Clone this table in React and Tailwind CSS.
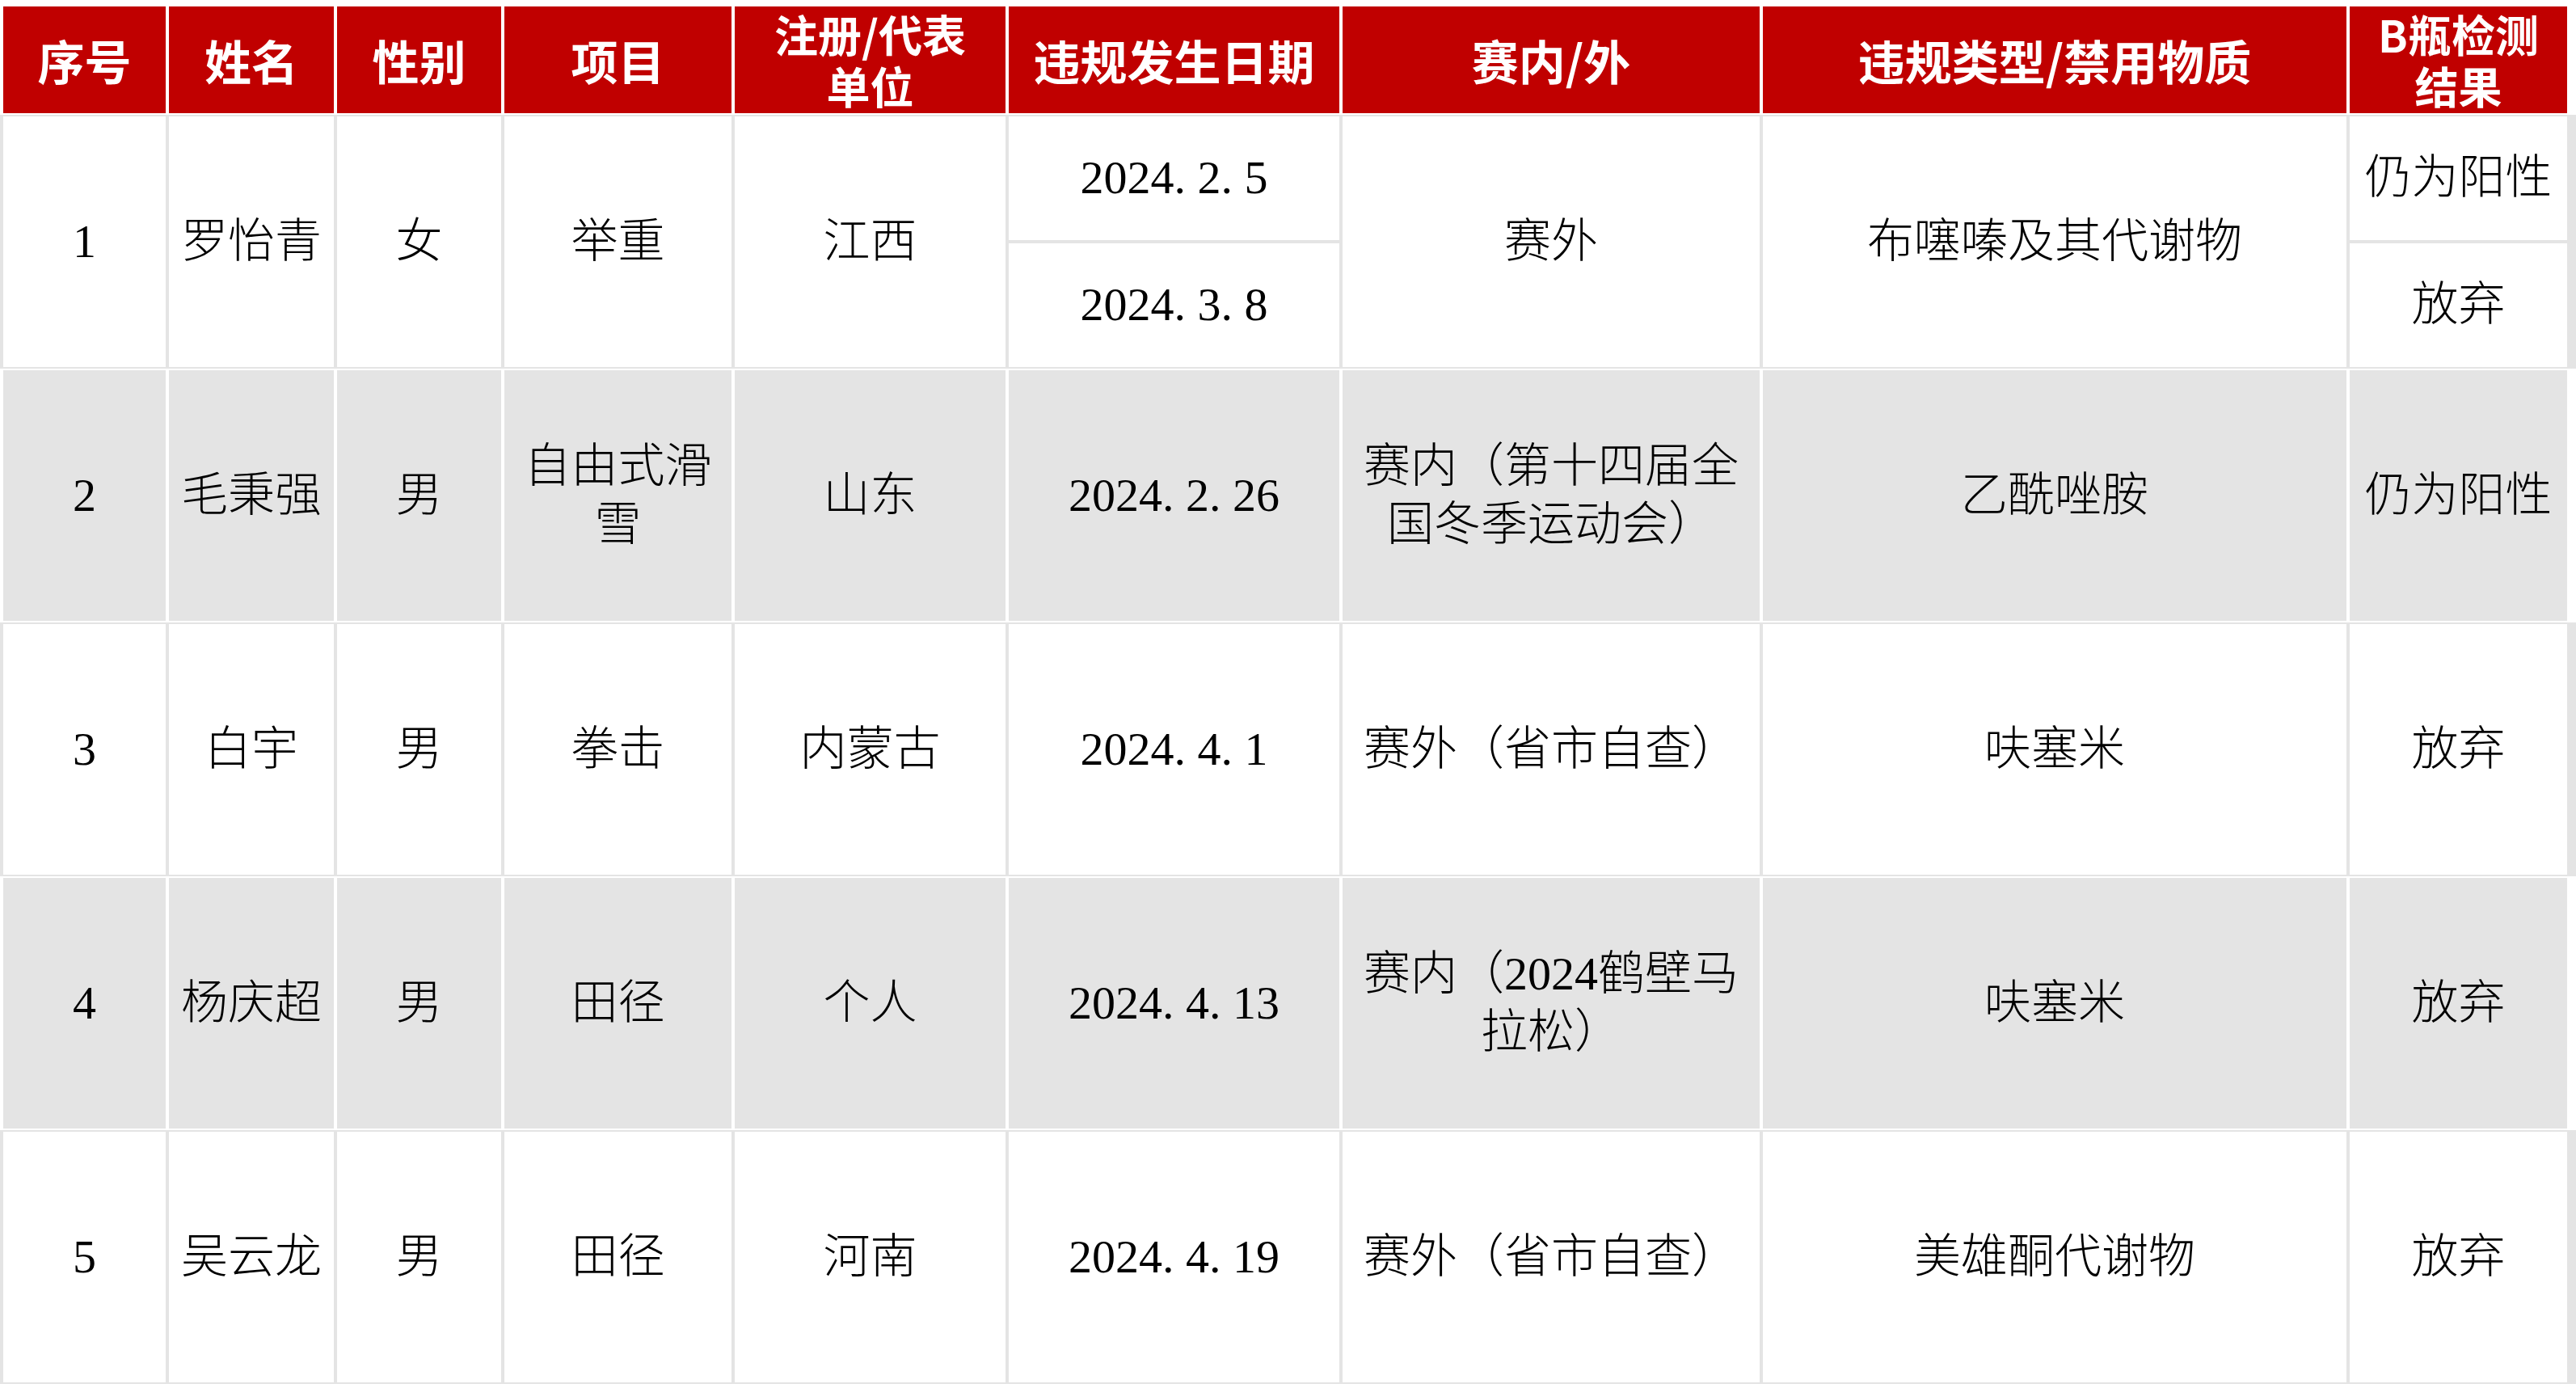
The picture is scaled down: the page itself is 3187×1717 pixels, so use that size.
import React from 'react';

// 兴奋剂违规通报表
const ROWS = [
  { no: '1', name: '罗怡青', sex: '女', item: '举重', unit: '江西', dates: ['2024.2.5', '2024.3.8'], scope: '赛外', type: '布噻嗪及其代谢物', results: ['仍为阳性', '放弃'], gray: false },
  { no: '2', name: '毛秉强', sex: '男', item: '自由式滑雪', unit: '山东', dates: ['2024.2.26'], scope: '赛内（第十四届全国冬季运动会）', type: '乙酰唑胺', results: ['仍为阳性'], gray: true },
  { no: '3', name: '白宇', sex: '男', item: '拳击', unit: '内蒙古', dates: ['2024.4.1'], scope: '赛外（省市自查）', type: '呋塞米', results: ['放弃'], gray: false },
  { no: '4', name: '杨庆超', sex: '男', item: '田径', unit: '个人', dates: ['2024.4.13'], scope: '赛内（2024鹤壁马拉松）', type: '呋塞米', results: ['放弃'], gray: true },
  { no: '5', name: '吴云龙', sex: '男', item: '田径', unit: '河南', dates: ['2024.4.19'], scope: '赛外（省市自查）', type: '美雄酮代谢物', results: ['放弃'], gray: false },
];

const GRID = 'grid grid-cols-[201px_204px_203px_281px_335px_409px_516px_722px_269px] gap-x-[4px] px-[4px] py-[2px]';

const HeadCell = ({ children, small = false }) => (
  <div
    className={`bg-[#c00000] h-[132px] flex items-center justify-center text-center text-white font-bold ${
      small ? 'text-[54px] leading-[64px]' : 'text-[58px] leading-[64px]'
    }`}
  >
    <div>{children}</div>
  </div>
);

// 日期里的点按等宽宋体的半角宽度占位
const DateText = ({ value }) => {
  const parts = value.split('.');
  return (
    <span className="font-['Liberation_Serif',serif]">
      {parts.map((p, i) => (
        <React.Fragment key={i}>
          {p}
          {i < parts.length - 1 && <span className="mr-[0.25em]">.</span>}
        </React.Fragment>
      ))}
    </span>
  );
};

const Cell = ({ bg, children }) => (
  <div className={`${bg} flex-1 flex items-center justify-center text-center px-[8px]`}>
    <div>{children}</div>
  </div>
);

const BodyRow = ({ row }) => {
  const sep = row.gray ? 'bg-white' : 'bg-[#e4e4e4]';
  const bg = row.gray ? 'bg-[#e4e4e4]' : 'bg-white';
  return (
    <div className={`${GRID} ${sep} h-[314px]`}>
      <Cell bg={bg}>{row.no}</Cell>
      <Cell bg={bg}>{row.name}</Cell>
      <Cell bg={bg}>{row.sex}</Cell>
      <Cell bg={bg}>{row.item}</Cell>
      <Cell bg={bg}>{row.unit}</Cell>
      <div className="flex flex-col gap-y-[4px]">
        {row.dates.map((d) => (
          <Cell key={d} bg={bg}><DateText value={d} /></Cell>
        ))}
      </div>
      <Cell bg={bg}>{row.scope}</Cell>
      <Cell bg={bg}>{row.type}</Cell>
      <div className="flex flex-col gap-y-[4px]">
        {row.results.map((r) => (
          <Cell key={r} bg={bg}>{r}</Cell>
        ))}
      </div>
    </div>
  );
};

export default function App() {
  return (
    <div className="w-[3187px] h-[1717px] bg-white pt-[6px] overflow-hidden font-['Liberation_Serif','Noto_Sans_CJK_SC',serif]">
      <div className="font-['Noto_Sans_CJK_SC',sans-serif]">
        <div className={`${GRID} bg-white`}>
          <HeadCell>序号</HeadCell>
          <HeadCell>姓名</HeadCell>
          <HeadCell>性别</HeadCell>
          <HeadCell>项目</HeadCell>
          <HeadCell small>注册/代表<br />单位</HeadCell>
          <HeadCell>违规发生日期</HeadCell>
          <HeadCell>赛内/外</HeadCell>
          <HeadCell>违规类型/禁用物质</HeadCell>
          <HeadCell small>B瓶检测<br />结果</HeadCell>
        </div>
      </div>
      <div className="text-black text-[58px] leading-[1.25] font-light">
        {ROWS.map((row) => (
          <BodyRow key={row.no} row={row} />
        ))}
      </div>
    </div>
  );
}
